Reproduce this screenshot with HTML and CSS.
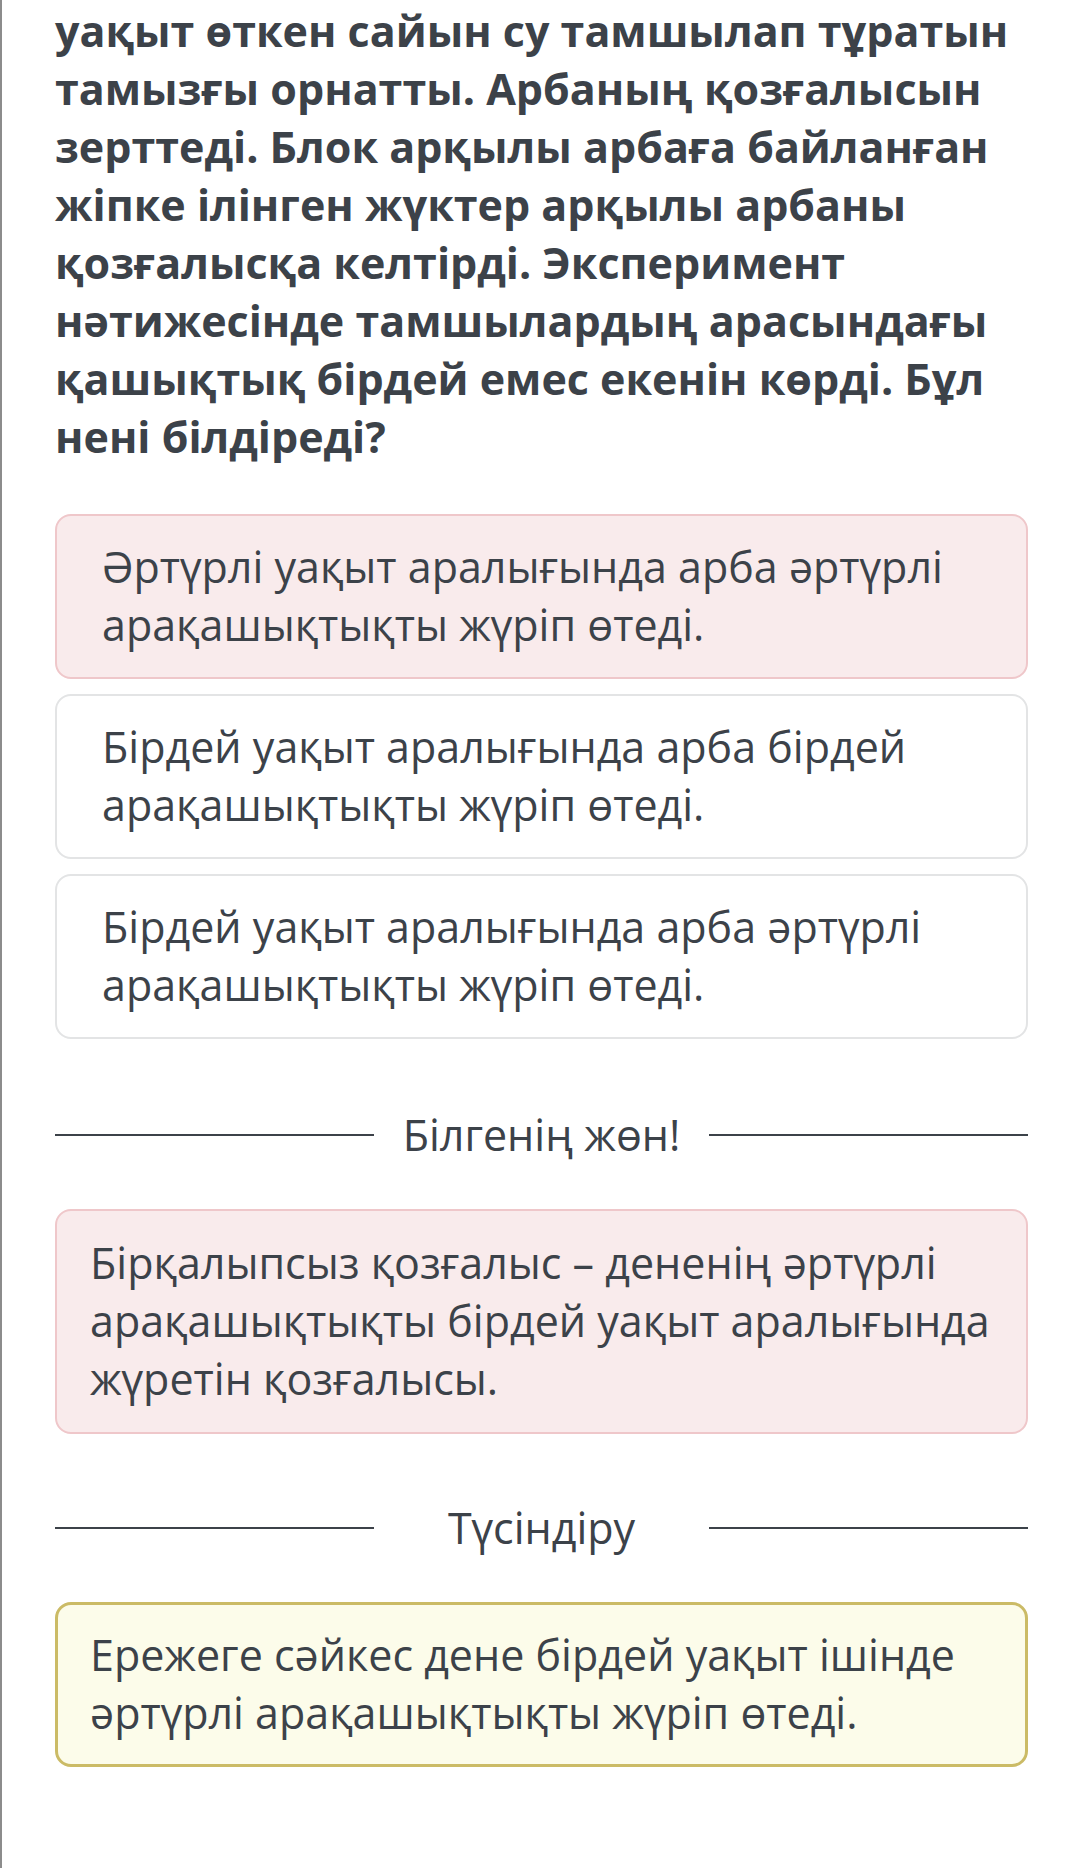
FILE: index.html
```html
<!doctype html>
<html lang="kk">

<head>
  <meta charset="UTF-8" />
  <meta name="viewport" content="width=device-width, initial-scale=1.0" />
  <title>Тест</title>
  <link rel="stylesheet" href="styles.css">
</head>

<body>
  <div class="page">
    <p class="question">уақыт өткен сайын су тамшылап тұратын тамызғы орнатты. Арбаның қозғалысын зерттеді. Блок арқылы арбаға байланған жіпке ілінген жүктер арқылы арбаны қозғалысқа келтірді. Эксперимент нәтижесінде тамшылардың арасындағы қашықтық бірдей емес екенін көрді. Бұл нені білдіреді?</p>

    <div class="options">
      <div class="option wrong">Әртүрлі уақыт аралығында арба әртүрлі арақашықтықты жүріп өтеді.</div>
      <div class="option">Бірдей уақыт аралығында арба бірдей арақашықтықты жүріп өтеді.</div>
      <div class="option">Бірдей уақыт аралығында арба әртүрлі арақашықтықты жүріп өтеді.</div>
    </div>

    <div class="divider divider-first">
      <span class="divider-line"></span>
      <span class="divider-title">Білгенің жөн!</span>
      <span class="divider-line"></span>
    </div>
    <div class="note note-pink">Бірқалыпсыз қозғалыс – дененің әртүрлі арақашықтықты бірдей уақыт аралығында жүретін қозғалысы.</div>

    <div class="divider">
      <span class="divider-line"></span>
      <span class="divider-title">Түсіндіру</span>
      <span class="divider-line"></span>
    </div>
    <div class="note note-yellow">Ережеге сәйкес дене бірдей уақыт ішінде әртүрлі арақашықтықты жүріп өтеді.</div>
  </div>
</body>

</html>
```

FILE: styles.css
```css
* {
  box-sizing: border-box;
}

html,
body {
  margin: 0;
  background: #fff;
}

body {
  font-family: "Open Sans", "Noto Sans", sans-serif;
  color: #3c4249;
  font-size: 43px;
  line-height: 58px;
  border-left: 2px solid #8c8c8c;
  min-height: 1868px;
}

.page {
  padding: 2px 52px 0 53px;
}

.question {
  margin: 0;
  font-weight: 700;
}

.options {
  display: flex;
  flex-direction: column;
  gap: 15px;
  margin-top: 48px;
}

.option {
  background: #fff;
  border: 2px solid #e3e4e5;
  border-radius: 16px;
  padding: 22px 30px 23px 45px;
}

.option.wrong {
  background: #f9ebec;
  border-color: #efc7ca;
}

.divider {
  display: flex;
  align-items: center;
  margin-top: 65px;
}

.divider-first {
  margin-top: 67px;
}

.divider-line {
  flex: 1;
  height: 2px;
  background: #3c4249;
}

.divider-title {
  width: 335px;
  text-align: center;
}

.note {
  margin-top: 45px;
  border-radius: 16px;
  padding: 23px 30px 24px 33px;
  border: 2px solid;
}

.note-pink {
  background: #f9ebec;
  border-color: #efc7ca;
}

.note-yellow {
  background: #fcfcea;
  border: 3px solid #cbbb66;
  padding: 21px 30px 22px 32px;
}
```
